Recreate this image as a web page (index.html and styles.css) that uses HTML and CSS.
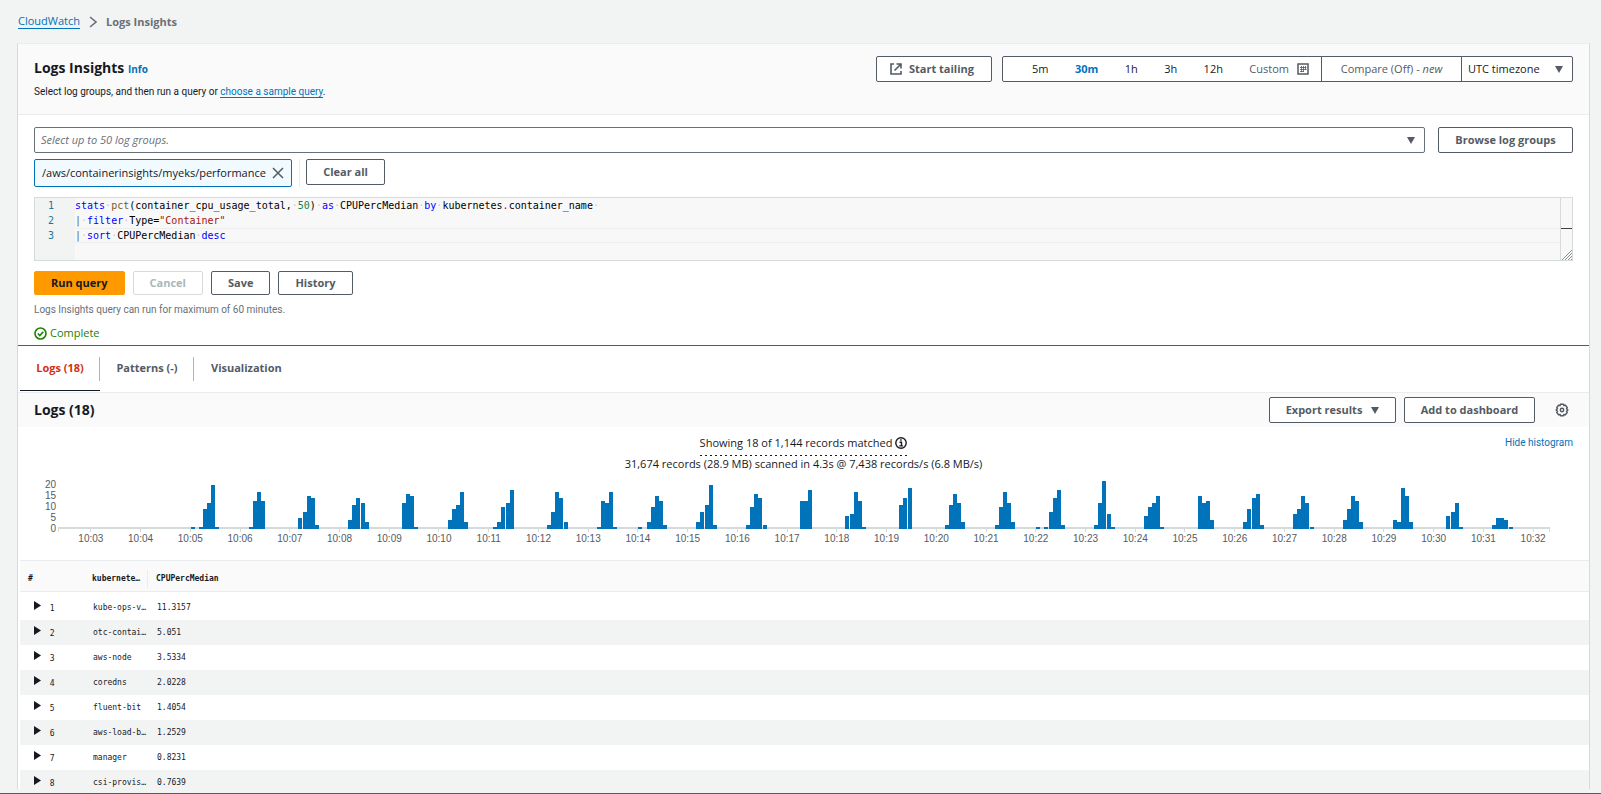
FILE: index.html
```html
<!DOCTYPE html>
<html lang="en">
<head>
    <meta charset="UTF-8">
    <meta name="viewport" content="width=device-width, initial-scale=1.0">
    <title>Logs Insights</title>
    <link rel="stylesheet" href="styles.css">
</head>
<body>
    <nav class="breadcrumb" aria-label="Breadcrumb">
        <a href="#">CloudWatch</a>
        <svg width="8" height="12" viewBox="0 0 8 12"><path d="M1 1l6 5-6 5" fill="none" stroke="#687078" stroke-width="1.6"/></svg>
        <span>Logs Insights</span>
    </nav>

    <main class="panel">
        <header class="panel-header">
            <div class="heading">
                <h1>Logs Insights <a href="#" class="info">Info</a></h1>
                <p>Select log groups, and then run a query or <a href="#" class="underlined">choose a sample query</a>.</p>
            </div>
            <div class="header-actions">
                <button class="btn tail">
                    <svg width="12" height="12" viewBox="0 0 12 12" fill="none" stroke="#545b64" stroke-width="1.6"><path d="M4 1H1v10h10V8M6.500 1H11v4.500M11 1L4.500 7.500"/></svg>
                    Start tailing
                </button>
                <div class="range">
                    <div class="range-times">
                        <button>5m</button>
                        <button class="active">30m</button>
                        <button>1h</button>
                        <button>3h</button>
                        <button>12h</button>
                        <button class="custom">Custom
                            <svg width="12" height="12" viewBox="0 0 12 12"><rect x="1" y="1" width="10" height="10" fill="#fff" stroke="#545b64" stroke-width="1.500"/><path d="M4.500 3v6M6.500 3v6M8.500 3v4M3 4.500h6.500M3 6.500h6.500M3 8.500h4" stroke="#545b64" stroke-width=".8"/></svg>
                        </button>
                    </div>
                    <button class="compare">Compare (Off) - <em>new</em></button>
                    <div class="select zone">
                        <select aria-label="Timezone"><option>UTC timezone</option></select>
                        <svg class="caret" width="8" height="7" viewBox="0 0 8 7"><path d="M0 0h8L4 7z"/></svg>
                    </div>
                </div>
            </div>
        </header>

        <section class="query">
            <div class="group-row">
                <div class="select groups">
                    <select aria-label="Log groups"><option>Select up to 50 log groups.</option></select>
                    <svg class="caret" width="8" height="7" viewBox="0 0 8 7"><path d="M0 0h8L4 7z"/></svg>
                </div>
                <button class="btn browse">Browse log groups</button>
            </div>
            <div class="token-row">
                <div class="token">/aws/containerinsights/myeks/performance
                    <button aria-label="Remove"><svg width="12" height="12" viewBox="0 0 12 12"><path d="M1 1l10 10M11 1L1 11" stroke="#545b64" stroke-width="1.500"/></svg></button>
                </div>
                <div class="token-clear"><button class="btn clear">Clear all</button></div>
            </div>

            <div class="editor">
                <ol class="gutter"><li>1</li><li>2</li><li>3</li></ol>
                <div class="code">
                    <pre><b>stats</b><s>·</s><i>pct</i>(container_cpu_usage_total,<s>·</s><u>50</u>)<s>·</s><b>as</b><s>·</s>CPUPercMedian<s>·</s><b>by</b><s>·</s>kubernetes<q>.</q>container_name<s>·</s></pre>
                    <pre><em>|</em><s>·</s><b>filter</b><s>·</s>Type=<q>"Container"</q></pre>
                    <pre class="current"><em>|</em><s>·</s><b>sort</b><s>·</s>CPUPercMedian<s>·</s><b>desc</b></pre>
                </div>
                <div class="ruler">
                    <svg class="grip" width="10" height="10" viewBox="0 0 10 10"><path d="M0 10L10 0M3 10l7-7M6 10l4-4M9 10l1-1" stroke="#879596"/></svg>
                </div>
            </div>

            <div class="run-row">
                <button class="btn primary">Run query</button>
                <button class="btn" disabled>Cancel</button>
                <button class="btn">Save</button>
                <button class="btn">History</button>
            </div>
            <p class="note">Logs Insights query can run for maximum of 60 minutes.</p>
            <p class="status">
                <svg width="13" height="13" viewBox="0 0 13 13" fill="none" stroke="#1d8102" stroke-width="1.600"><circle cx="6.500" cy="6.500" r="5.500"/><path d="M3.800 6.500l2 2 3.500-3.700"/></svg>
                Complete
            </p>
        </section>

        <div class="tabs" role="tablist">
            <button role="tab" aria-selected="true" class="tab active">Logs (18)</button>
            <button role="tab" class="tab">Patterns (-)</button>
            <button role="tab" class="tab">Visualization</button>
        </div>

        <div class="results-header">
            <h2>Logs (18)</h2>
            <button class="btn export">Export results
                <svg class="caret-inline" width="8" height="7" viewBox="0 0 8 7"><path d="M0 0h8L4 7z"/></svg>
            </button>
            <button class="btn dashboard">Add to dashboard</button>
            <button class="gear" aria-label="Settings">
                <svg width="14" height="14" viewBox="0 0 14 14" fill="none" stroke="#545b64" stroke-width="1.500"><path d="M5.500 1.200h3l.4 1.300 1.600-.2 1.700 2.200-.6 1.200 1.200 1.300-1.200 1.300.6 1.200-1.700 2.200-1.600-.2-.4 1.300h-3l-.4-1.300-1.600.2-1.700-2.200.6-1.200L1.200 7l1.200-1.300-.6-1.200 1.700-2.200 1.600.2z"/><circle cx="7" cy="7" r="1.700"/></svg>
            </button>
        </div>

        <section class="histogram">
            <div class="summary">
                <p class="matched">Showing 18 of 1,144 records matched
                    <svg width="12" height="12" viewBox="0 0 12 12"><circle cx="6" cy="6" r="5.200" fill="none" stroke="#16191f" stroke-width="1.400"/><path d="M4.500 5.200h2v3.300M4.300 8.900h3.600M5.200 3h1.500" fill="none" stroke="#16191f" stroke-width="1.400"/></svg>
                </p>
                <p>31,674 records (28.9 MB) scanned in 4.3s @ 7,438 records/s (6.8 MB/s)</p>
                <a href="#" class="hide">Hide histogram</a>
            </div>
            <div class="chart">
                <div class="y-axis"><span>20</span><span>15</span><span>10</span><span>5</span><span>0</span></div>
                <div class="plot">
                    <svg id="bars" viewBox="0 0 360 22" preserveAspectRatio="none"></svg>
                    <div class="x-axis" id="xAxis"></div>
                </div>
            </div>
        </section>

        <table class="results">
            <thead>
                <tr><th class="col-num">#</th><th class="col-name"><span>kubernete…</span></th><th>CPUPercMedian</th></tr>
            </thead>
            <tbody id="rows"></tbody>
        </table>
    </main>
    <div class="bottom-bar"></div>
    <script src="script.js"></script>
</body>
</html>
```

FILE: styles.css
```css
* {
    box-sizing: border-box;
}
body {
    display: flex;
    flex-direction: column;
    height: 100vh;
    margin: 0;
    overflow: hidden;
    background-color: #f2f3f3;
    color: #16191f;
    font-family: "Open Sans", "Noto Sans", sans-serif;
    font-size: 11px;
    line-height: 16px;
}
h1, h2, p, pre, ol {
    margin: 0;
    padding: 0;
}
a {
    color: #0073bb;
    text-decoration: none;
}
button, select {
    font-family: inherit;
    font-size: 11px;
    line-height: 16px;
    color: #545b64;
    cursor: pointer;
}
svg {
    flex: none;
}
.breadcrumb {
    display: flex;
    align-items: center;
    gap: 9px;
    height: 43px;
    padding-left: 18px;
    color: #687078;
    flex: none;
}
.breadcrumb a {
    line-height: 14px;
    border-bottom: 1px solid #0073bb;
}
.breadcrumb span {
    font-weight: 700;
}
.panel {
    flex: 1;
    min-height: 0;
    overflow: hidden;
    margin: 0 11px 4px 17px;
    background-color: #fff;
    border: 1px solid #d5dbdb;
    border-top-color: #eaeded;
    border-bottom: none;
}
.panel-header {
    display: flex;
    justify-content: space-between;
    align-items: flex-start;
    height: 71px;
    padding: 12px 16px 0 16px;
    background-color: #fafafa;
    border-bottom: 1px solid #eaeded;
}
h1, h2 {
    font-size: 14px;
    line-height: 24px;
}
.info {
    font-size: 10px;
}
.heading p, .note, .hide {
    font-family: Roboto, "Open Sans", sans-serif;
    font-size: 10px;
}
.heading p {
    line-height: 14px;
    margin-top: 4px;
}
.underlined {
    border-bottom: 1px solid #0073bb;
}
.header-actions, .range, .range-times {
    display: flex;
}
.header-actions {
    gap: 10px;
}
.btn {
    display: flex;
    align-items: center;
    justify-content: center;
    height: 26px;
    padding: 0 16px;
    background-color: #fff;
    border: 1px solid #545b64;
    border-radius: 2px;
    font-weight: 700;
}
.tail {
    width: 116px;
    gap: 7px;
    padding: 0 4px 0 0;
}
.range {
    height: 26px;
    background-color: #fff;
    border: 1px solid #545b64;
    border-radius: 2px;
}
.range button {
    padding: 0;
    background: none;
    border: none;
}
.range-times {
    width: 318px;
    padding: 0 12px 0 29px;
    justify-content: space-between;
}
.range-times button {
    color: #16191f;
}
.range-times .active {
    color: #0073bb;
    font-weight: 700;
}
.range-times .custom {
    display: flex;
    align-items: center;
    gap: 8px;
    color: #545b64;
}
.range .compare {
    width: 141px;
    border-left: 1px solid #545b64;
    border-right: 1px solid #545b64;
}
.select {
    position: relative;
}
.select select {
    width: 100%;
    height: 24px;
    padding: 0 6px;
    appearance: none;
    background: none;
    border: none;
}
.caret {
    position: absolute;
    right: 9px;
    top: 9px;
    pointer-events: none;
}
.caret, .caret-inline {
    fill: #545b64;
}
.zone {
    width: 110px;
}
.zone select {
    color: #16191f;
}
.query {
    padding: 12px 16px 4px;
    border-bottom: 1px solid #545b64;
}
.group-row, .token-row, .run-row {
    display: flex;
}
.group-row {
    gap: 13px;
}
.groups {
    flex: 1;
    border: 1px solid #687078;
    border-radius: 2px;
}
.groups select {
    color: #687078;
    font-style: italic;
}
.browse {
    width: 135px;
    padding: 0;
}
.token-row {
    margin-top: 6px;
    gap: 7px;
}
.token {
    display: flex;
    align-items: center;
    justify-content: space-between;
    width: 258px;
    height: 28px;
    padding: 0 7px;
    background-color: #f1faff;
    border: 1px solid #0073bb;
    border-radius: 2px;
}
.token button {
    display: flex;
    padding: 0;
    background: none;
    border: none;
}
.token-clear {
    padding-left: 6px;
    border-left: 1px solid #eaeded;
}
.clear {
    width: 79px;
    padding: 0;
}
.editor {
    display: flex;
    height: 64px;
    margin-top: 10px;
    background-color: #f8f8f8;
    border: 1px solid #d5dbdb;
    font-family: "DejaVu Sans Mono", monospace;
    font-size: 10px;
    line-height: 15px;
    color: #000;
}
.gutter {
    width: 40px;
    padding-right: 21px;
    background-color: #f2f3f3;
    color: #237893;
    text-align: right;
    list-style: none;
}
.code {
    flex: 1;
}
.code pre {
    height: 15px;
    font: inherit;
}
.code .current {
    box-shadow: inset 0 1px #eee, inset 0 -1px #eee;
}
.code b {
    color: #00f;
    font-weight: 400;
}
.code i {
    color: #795e26;
    font-style: normal;
}
.code em {
    color: #545b64;
    font-style: normal;
}
.code s {
    color: #ccc;
    text-decoration: none;
}
.code u {
    color: #098658;
    text-decoration: none;
}
.code q {
    color: #a31515;
    quotes: none;
}
.ruler {
    position: relative;
    width: 12px;
    border-left: 1px solid #d5dbdb;
    background: linear-gradient(#424242, #424242) 0 30px / 100% 1px no-repeat;
}
.grip {
    position: absolute;
    right: 0;
    bottom: 0;
}
.run-row {
    gap: 8px;
    margin-top: 10px;
}
.run-row .btn {
    height: 24px;
}
.btn.primary {
    background-color: #ff9900;
    border-color: #ff9900;
    color: #16191f;
}
.btn:disabled {
    color: #aab7b8;
    border-color: #d5dbdb;
}
.note {
    margin-top: 7px;
    color: #687078;
}
.status {
    display: flex;
    align-items: center;
    gap: 3px;
    margin-top: 7px;
    color: #1d8102;
}
.tabs {
    display: flex;
    align-items: flex-start;
    height: 47px;
    padding-left: 2px;
    border-bottom: 1px solid #eaeded;
}
.tab {
    height: 45px;
    padding: 0;
    background: none;
    border: none;
    border-bottom: 1px solid transparent;
    font-weight: 700;
}
/* short divider on the right of each tab */
.tab:not(:last-child) {
    background: linear-gradient(#aab7b8, #aab7b8) right 11px / 1px 24px no-repeat;
}
.tab.active {
    width: 80px;
    border-bottom-color: #16191f;
    color: #d13212;
}
.tab:nth-child(2) {
    width: 94px;
}
.tab:last-child {
    padding: 0 17px;
}
.results-header {
    display: flex;
    align-items: center;
    gap: 8px;
    height: 34px;
    padding: 0 16px;
    background-color: #fafafa;
}
.results-header h2 {
    flex: 1;
}
.export {
    width: 127px;
    gap: 9px;
    padding: 0;
}
.dashboard {
    width: 131px;
    padding: 0;
}
.gear {
    display: flex;
    margin-left: 8px;
    padding: 0 4px;
    background: none;
    border: none;
}
.histogram {
    padding: 8px 16px 0;
}
.summary {
    position: relative;
    text-align: center;
}
.matched {
    display: flex;
    align-items: center;
    gap: 3px;
    width: max-content;
    height: 21px;
    margin: 0 auto;
    padding-bottom: 5px;
    background: repeating-linear-gradient(90deg, #16191f 0 2px, transparent 2px 5px) bottom / 100% 1px no-repeat;
}
.hide {
    position: absolute;
    top: 0;
    right: 0;
}
.chart {
    display: flex;
    height: 81px;
    margin-top: 7px;
    padding-right: 23px;
    font-family: "Liberation Sans", Arial, sans-serif;
    font-size: 10px;
    color: #545b64;
}
.y-axis {
    display: flex;
    flex-direction: column;
    width: 24px;
    padding-right: 2px;
    text-align: right;
    line-height: 11px;
}
.plot {
    flex: 1;
    padding-top: 2px;
    background-image: linear-gradient(#d5dbdb, #d5dbdb), linear-gradient(#d5dbdb, #d5dbdb);
    background-position: left 48px, right 48px;
    background-size: 1px 5px;
    background-repeat: no-repeat;
}
#bars {
    display: block;
    width: 100%;
    height: 48px;
    background: linear-gradient(#d5dbdb, #d5dbdb) bottom / 100% 2px no-repeat;
    fill: #0073bb;
    shape-rendering: crispEdges;
}
.x-axis {
    display: grid;
    grid-template-columns: repeat(30, 1fr);
    margin: 0 -8px 0 8px;
    line-height: 13px;
    text-align: center;
}
.x-axis span::before {
    content: "";
    display: block;
    width: 1px;
    height: 3px;
    margin: 0 auto;
    background-color: #d5dbdb;
}
.results {
    width: calc(100% - 2px);
    margin-left: 2px;
    table-layout: fixed;
    border-collapse: collapse;
    font-family: "DejaVu Sans Mono", monospace;
    font-size: 8px;
    line-height: 12px;
    text-align: left;
}
.results th {
    height: 31px;
    padding: 5px 0 0 8px;
    background-color: #fafafa;
    border-top: 1px solid #eaeded;
    border-bottom: 1px solid #eaeded;
}
.results .col-num {
    width: 64px;
}
.results .col-name {
    width: 64px;
}
.col-name span {
    display: block;
    line-height: 18px;
    border-right: 1px solid #eaeded;
}
.results td {
    height: 25px;
    padding: 2px 0 0 9px;
    white-space: nowrap;
}
.results tbody tr:first-child td {
    height: 28px;
    padding-top: 5px;
}
.results tbody tr:nth-child(even) {
    background-color: #f2f3f3;
}
.results td:first-child {
    padding-left: 14px;
}
.results td svg {
    margin: 0 4px 1px 0;
    fill: #16191f;
}
.bottom-bar {
    flex: none;
    height: 1px;
    background-color: #545b64;
}
```

FILE: script.js
```js
const SVG_NS = "http://www.w3.org/2000/svg";

// runs of 5 second bins: [first bin, counts...]
const runs = [
    [32, 1, 0, 1, 9, 12, 20, 1],
    [46, 1, 13, 17, 13],
    [58, 5, 8, 15, 14, 2],
    [70, 4, 11, 14, 12, 3],
    [83, 12, 16, 15, 1],
    [94, 4, 9, 11, 17, 3],
    [105, 1, 3, 10, 12, 18],
    [118, 2, 8, 17, 14, 3],
    [130, 1, 13, 12, 17, 1],
    [140, 1, 0, 3, 10, 15, 13, 2],
    [154, 3, 8, 11, 20, 2],
    [166, 2, 10, 16, 14, 2],
    [179, 13, 13, 18],
    [190, 6, 7, 17, 13, 1],
    [203, 11, 14, 19],
    [214, 2, 11, 16, 12, 3],
    [226, 2, 10, 17, 12, 3],
    [236, 1, 0, 1, 8, 14, 18, 2],
    [250, 2, 12, 22, 7, 1],
    [262, 6, 10, 12, 15, 1],
    [275, 15, 12, 13, 4],
    [286, 3, 9, 14, 16, 2],
    [298, 7, 9, 15, 12, 1],
    [310, 4, 9, 15, 13, 3],
    [322, 4, 3, 19, 15, 3],
    [335, 6, 8, 12, 1],
    [346, 2, 5, 5, 4, 1]
];

const rows = [
    ["kube-ops-v…", "11.3157"],
    ["otc-contai…", "5.051"],
    ["aws-node", "3.5334"],
    ["coredns", "2.0228"],
    ["fluent-bit", "1.4054"],
    ["aws-load-b…", "1.2529"],
    ["manager", "0.8231"],
    ["csi-provis…", "0.7639"]
];

const bars = document.getElementById("bars");
runs.forEach(([start, ...counts]) => {
    counts.forEach((count, i) => {
        const bar = document.createElementNS(SVG_NS, "rect");
        bar.setAttribute("x", start + i);
        bar.setAttribute("y", 22 - count);
        bar.setAttribute("width", 0.966);
        bar.setAttribute("height", count);
        bars.appendChild(bar);
    });
});

const xAxis = document.getElementById("xAxis");
for (let minute = 3; minute <= 32; minute++) {
    const label = document.createElement("span");
    label.textContent = "10:" + String(minute).padStart(2, "0");
    xAxis.appendChild(label);
}

document.getElementById("rows").innerHTML = rows.map(([name, value], i) => `
    <tr>
        <td><svg width="7" height="9" viewBox="0 0 7 9"><path d="M0 0l7 4.500L0 9z"/></svg> ${i + 1}</td>
        <td>${name}</td>
        <td>${value}</td>
    </tr>`).join("");
```
